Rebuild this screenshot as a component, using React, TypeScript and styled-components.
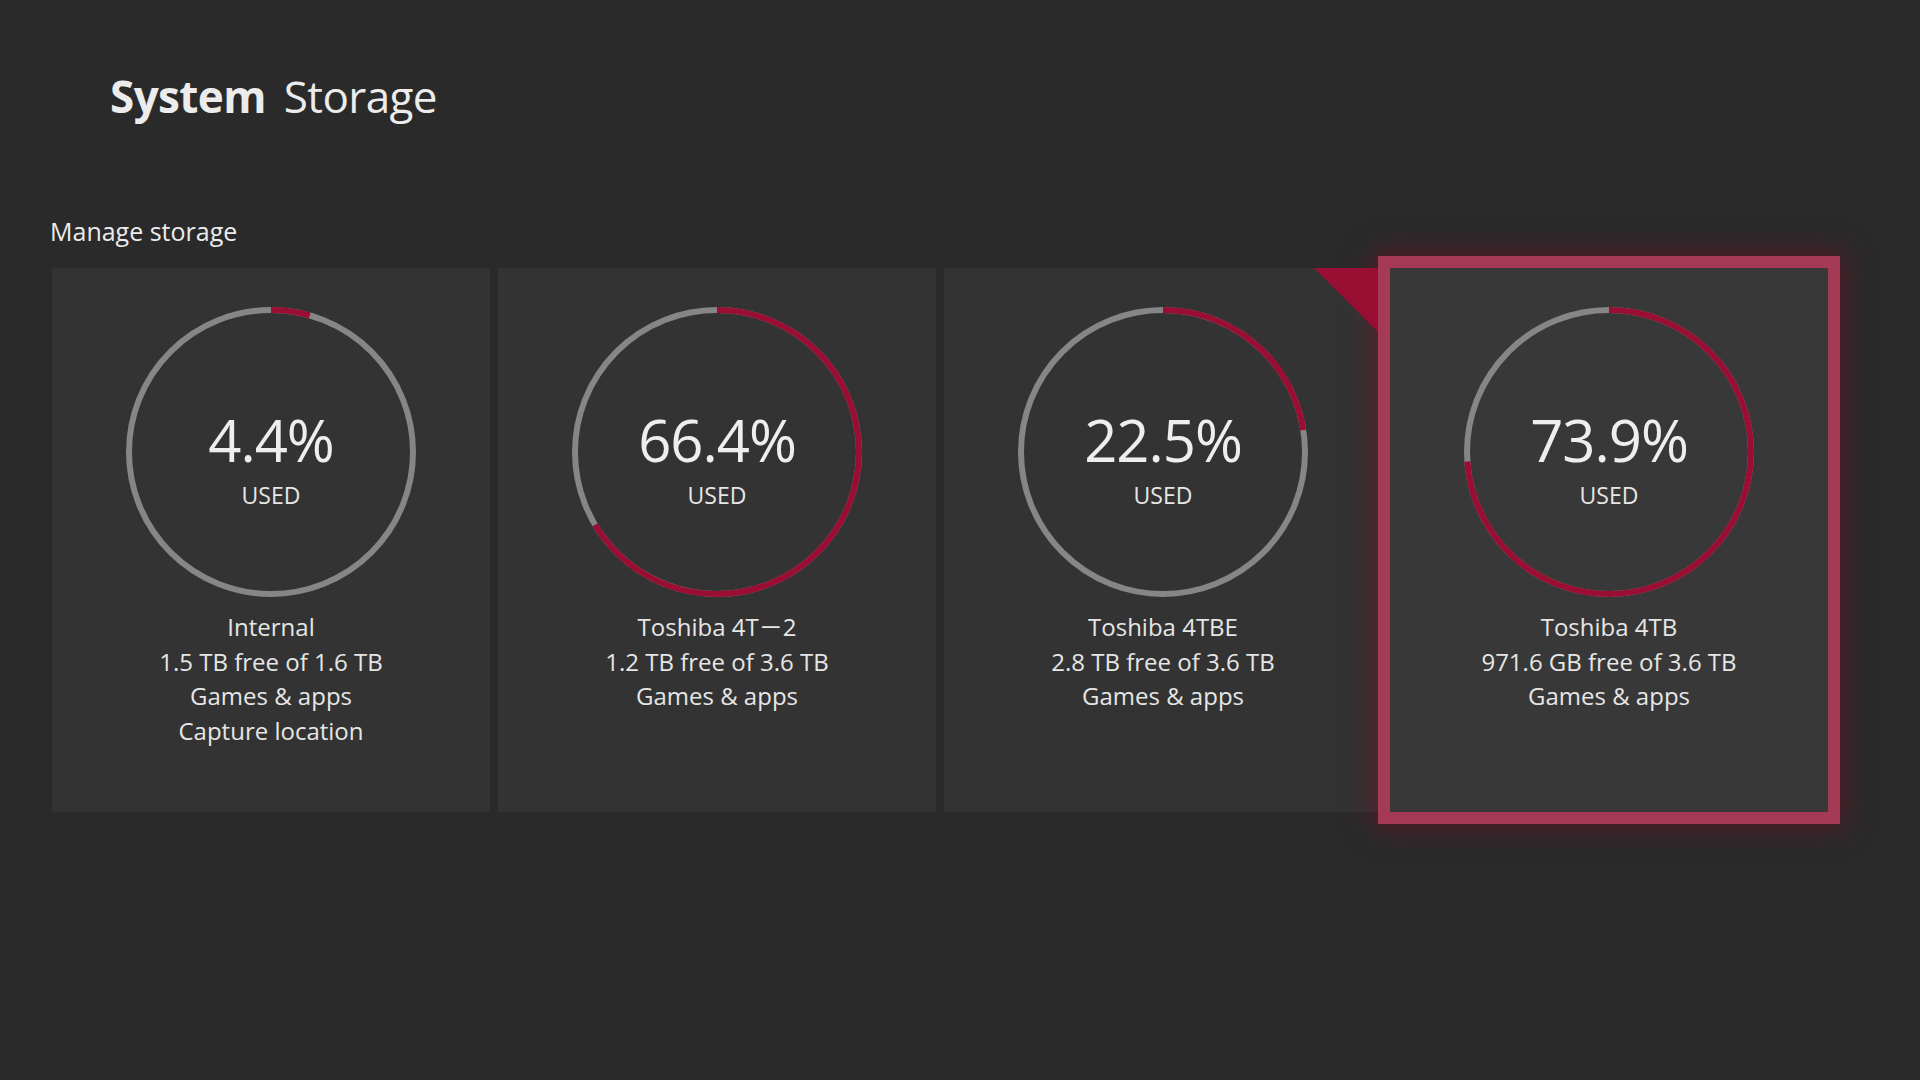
import React from "react";
import styled, { createGlobalStyle } from "styled-components";

const Global = createGlobalStyle`
  html, body {
    margin: 0;
    padding: 0;
    background: #2a2a2a;
  }
  body {
    font-family: "Open Sans", "Noto Sans", "Noto Sans CJK SC", "Liberation Sans", sans-serif;
    color: #ececec;
    width: 1920px;
    height: 1080px;
    overflow: hidden;
  }
`;

const Page = styled.div`
  width: 1920px;
  height: 1080px;
  background: #2a2a2a;
  display: flex;
  flex-direction: column;
`;

const Header = styled.h1`
  margin: 0;
  padding: 74px 0 0 110px;
  font-size: 44px;
  line-height: 44px;
  font-weight: 400;
  color: #ececec;
  display: flex;
  gap: 18px;
  letter-spacing: -0.6px;
`;

const HeaderStrong = styled.span`
  font-weight: 700;
`;

const SectionTitle = styled.h2`
  margin: 100px 0 0 50px;
  font-size: 25px;
  line-height: 27px;
  font-weight: 400;
  color: #ececec;
`;

const CardRow = styled.div`
  display: flex;
  gap: 8px;
  margin: 23px 0 0 52px;
`;

const Card = styled.div<{ $focused?: boolean }>`
  position: relative;
  width: 438px;
  height: 544px;
  box-sizing: border-box;
  padding-top: 39px;
  background: ${(p) => (p.$focused ? "#383838" : "#333333")};
  display: flex;
  flex-direction: column;
  align-items: center;
  ${(p) =>
    p.$focused
      ? `box-shadow: 0 0 0 12px #a53a56, 0 0 26px 16px rgba(120, 14, 42, 0.55);
         z-index: 2;`
      : ""}
`;

const FocusCorner = styled.div`
  position: absolute;
  top: 0;
  left: -76px;
  width: 64px;
  height: 64px;
  background: #990f33;
  clip-path: polygon(0 0, 100% 0, 100% 100%);
`;

const Ring = styled.div`
  display: grid;
  width: 290px;
  height: 290px;
  & > * {
    grid-area: 1 / 1;
  }
`;

const RingSvg = styled.svg`
  width: 290px;
  height: 290px;
  transform: rotate(-90deg);
`;

const RingLabel = styled.div`
  display: flex;
  flex-direction: column;
  align-items: center;
  padding-top: 103px;
`;

const Percent = styled.div`
  font-size: 58px;
  line-height: 60px;
  font-weight: 400;
  color: #eeeeee;
  letter-spacing: -1px;
`;

const Used = styled.div`
  margin-top: 12px;
  font-size: 23px;
  line-height: 26px;
  color: #e6e6e6;
`;

const Info = styled.div`
  margin-top: 13px;
  display: flex;
  flex-direction: column;
  align-items: center;
  font-size: 24px;
  line-height: 34.7px;
  color: #e6e6e6;
`;

type Drive = {
  pct: number;
  lines: string[];
  focused?: boolean;
};

const drives: Drive[] = [
  {
    pct: 4.4,
    lines: ["Internal", "1.5 TB free of 1.6 TB", "Games & apps", "Capture location"],
  },
  { pct: 66.4, lines: ["Toshiba 4T\uFF0D2", "1.2 TB free of 3.6 TB", "Games & apps"] },
  { pct: 22.5, lines: ["Toshiba 4TBE", "2.8 TB free of 3.6 TB", "Games & apps"] },
  {
    pct: 73.9,
    lines: ["Toshiba 4TB", "971.6 GB free of 3.6 TB", "Games & apps"],
    focused: true,
  },
];

const R = 142;
const C = 2 * Math.PI * R;

function Donut({ pct }: { pct: number }) {
  const used = (pct / 100) * C;
  return (
    <RingSvg viewBox="0 0 290 290">
      <circle cx="145" cy="145" r={R} fill="none" stroke="#868686" strokeWidth="6" />
      <circle
        cx="145"
        cy="145"
        r={R}
        fill="none"
        stroke="#9a0e33"
        strokeWidth="6"
        strokeDasharray={`${used} ${C}`}
      />
    </RingSvg>
  );
}

export default function App() {
  return (
    <>
      <Global />
      <Page>
        <Header>
          <HeaderStrong>System</HeaderStrong>
          <span>Storage</span>
        </Header>
        <SectionTitle>Manage storage</SectionTitle>
        <CardRow>
          {drives.map((d, i) => (
            <Card key={i} $focused={d.focused}>
              {d.focused && <FocusCorner />}
              <Ring>
                <Donut pct={d.pct} />
                <RingLabel>
                  <Percent>{d.pct}%</Percent>
                  <Used>USED</Used>
                </RingLabel>
              </Ring>
              <Info>
                {d.lines.map((l, j) => (
                  <div key={j}>{l}</div>
                ))}
              </Info>
            </Card>
          ))}
        </CardRow>
      </Page>
    </>
  );
}
